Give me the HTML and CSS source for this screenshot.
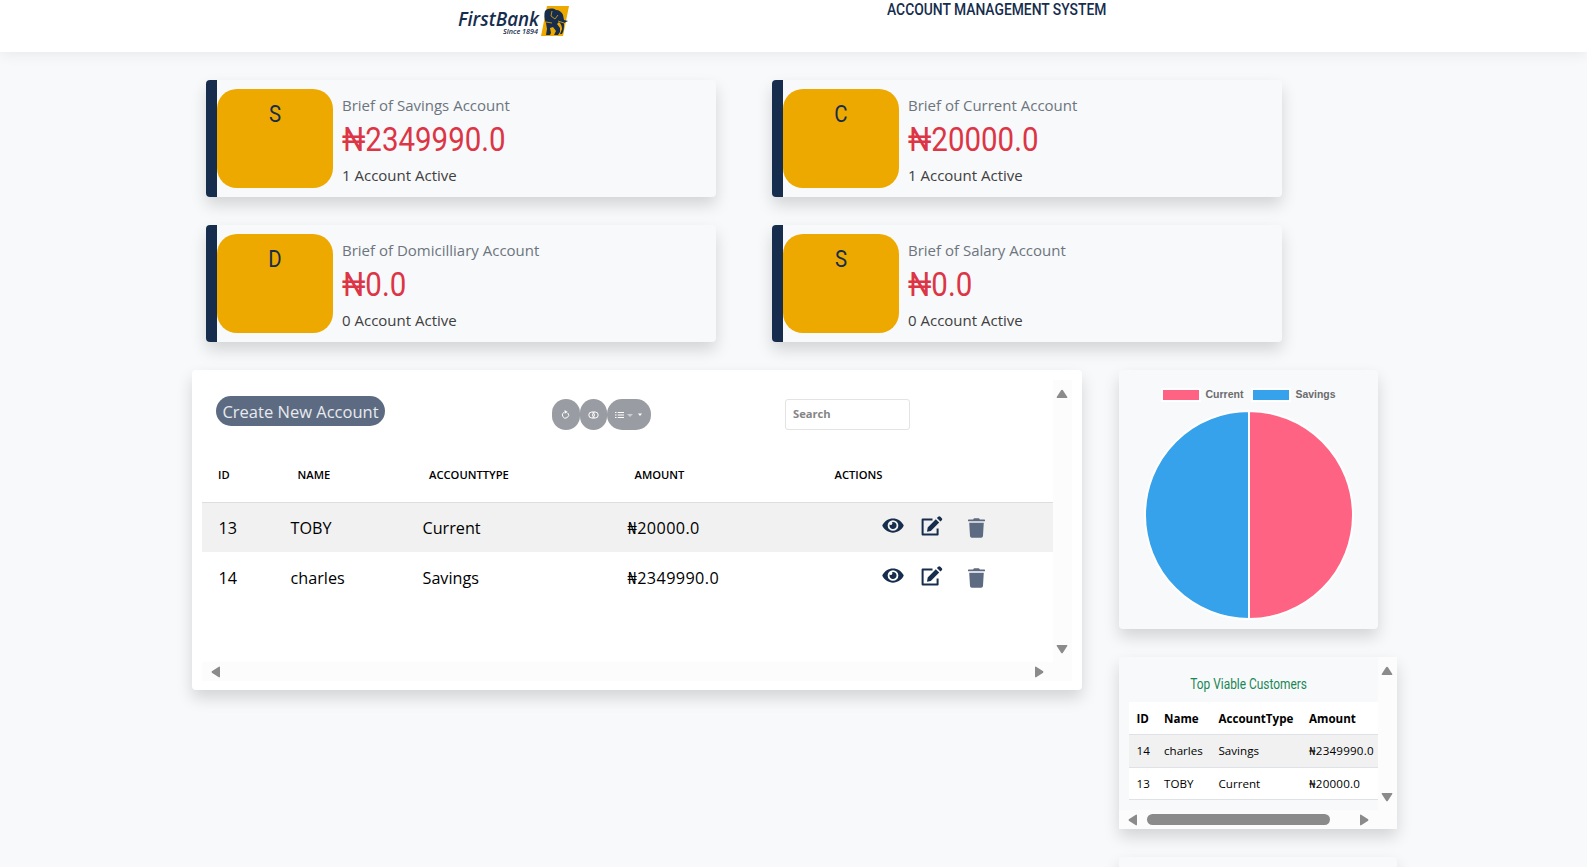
FILE: index.html
```html
<!DOCTYPE html>
<html lang="en">
<head>
<meta charset="utf-8">
<title>Account Management System</title>
<link rel="stylesheet" href="styles.css">
</head>
<body>
<svg class="defs" width="0" height="0" aria-hidden="true">
  <symbol id="eye" viewBox="0 0 576 512"><path d="M572.5 241.400C518.300 135.600 410.900 64 288 64S57.700 135.600 3.500 241.400a32.400 32.400 0 0 0 0 29.200C57.700 376.400 165.100 448 288 448s230.300-71.600 284.500-177.400a32.400 32.400 0 0 0 0-29.200zM288 400a144 144 0 1 1 144-144 144 144 0 0 1-144 144zm0-240a95.300 95.300 0 0 0-25.300 3.800 47.900 47.900 0 0 1-66.900 66.900A95.800 95.800 0 1 0 288 160z"/></symbol>
  <symbol id="edit" viewBox="0 0 22 20"><path fill="none" stroke="#162d4d" stroke-width="2" stroke-linejoin="round" d="M11.500 3.500H1.600V18.600H16.600V12.500"/><path d="M14.800 3.200l3.400 3.400-8.400 8.300-3.800.8.700-4.100zM15.900 2.100l1.300-1.300c.7-.7 1.500-.7 2.200 0l1.400 1.400c.6.700.6 1.400 0 2.100l-1.400 1.300z"/></symbol>
  <symbol id="trash" viewBox="0 0 448 512"><path d="M432 32H312l-9.400-18.700A24 24 0 0 0 281.100 0H166.800a23.700 23.700 0 0 0-21.400 13.300L136 32H16A16 16 0 0 0 0 48v16a16 16 0 0 0 16 16h416a16 16 0 0 0 16-16V48a16 16 0 0 0-16-16zM32 116l21.200 351a48 48 0 0 0 47.900 45h245.800a48 48 0 0 0 47.900-45L416 116z"/></symbol>
  <symbol id="arrow" viewBox="0 0 12 10"><path d="M5.100 1.200a1 1 0 0 1 1.800 0l4.400 6.700a.8.8 0 0 1-.7 1.100H1.400a.8.800 0 0 1-.7-1.100z"/></symbol>
</svg>

<header class="topbar">
  <svg class="logo" width="112" height="34" viewBox="0 0 112 34">
    <text class="logo-name" x="0" y="20.500" textLength="81" lengthAdjust="spacingAndGlyphs">FirstBank</text>
    <text class="logo-since" x="45" y="28.500" textLength="35" lengthAdjust="spacingAndGlyphs">Since 1894</text>
    <path fill="#eda900" d="M89 1h22l-6 30H83z"/>
    <path fill="#162d4d" d="M87 6c3-3 8-3 11-1 3 0 6 2 7 5l1 5 4 1-4 2c0 4 0 8-2 11h-2l2-5c0-3-1-5-3-7l-2 2 3 4v4l-2 3h-4l2-4-3-4-3 1 1 5-1 2h-4l1-6-1-6c-2-4-2-9-1-12z"/>
    <path fill="none" stroke="#eda900" stroke-width=".8" d="M94 6l-1 5 4 3 3-4m0 6l6 2M88 17l6 1"/>
  </svg>
  <h1 class="title"><span>ACCOUNT MANAGEMENT SYSTEM</span></h1>
</header>

<main>
  <section class="briefs">
    <article class="brief"><div class="badge"><span>S</span></div><div class="info"><p class="label">Brief of Savings Account</p><p class="sum"><span>₦2349990.0</span></p><p class="count">1 Account Active</p></div></article>
    <article class="brief"><div class="badge"><span>C</span></div><div class="info"><p class="label">Brief of Current Account</p><p class="sum"><span>₦20000.0</span></p><p class="count">1 Account Active</p></div></article>
    <article class="brief"><div class="badge"><span>D</span></div><div class="info"><p class="label">Brief of Domicilliary Account</p><p class="sum"><span>₦0.0</span></p><p class="count">0 Account Active</p></div></article>
    <article class="brief"><div class="badge"><span>S</span></div><div class="info"><p class="label">Brief of Salary Account</p><p class="sum"><span>₦0.0</span></p><p class="count">0 Account Active</p></div></article>
  </section>

  <div class="panels">
    <section class="accounts">
      <div class="content">
        <div class="toolbar">
          <button class="create">Create New Account</button>
          <div class="tools">
            <button class="tool"><svg width="9" height="10" viewBox="0 0 9 10"><path class="line" d="M3.200 2.200A3.100 3.100 0 1 0 6.800 3"/><path fill="#fff" d="M3.600 0L6.800 1.900 3.600 3.800z"/></svg></button>
            <button class="tool"><svg width="11" height="8" viewBox="0 0 11 8"><rect class="line" x=".8" y="1" width="9.400" height="6" rx="3"/><path class="line" d="M4.500 1.200a3 3 0 0 1 0 5.600M6.500 1.200a3 3 0 0 0 0 5.600"/></svg></button>
            <button class="tool wide"><svg width="28" height="8" viewBox="0 0 28 8"><path class="line" d="M0 1.500h1.500M0 4h1.500M0 6.500h1.500M2.700 1.500H9M2.700 4H9M2.700 6.500H9"/><path fill="#fff" opacity=".5" d="M12 3h6l-3 3z"/><path fill="#fff" d="M23 2.500h4l-2 2.500z"/></svg></button>
          </div>
          <input class="search" type="text" placeholder="Search">
        </div>
        <table class="grid">
          <thead><tr><th class="id">ID</th><th class="name">NAME</th><th class="type">ACCOUNTTYPE</th><th class="amount">AMOUNT</th><th>ACTIONS</th></tr></thead>
          <tbody>
            <tr><td>13</td><td>TOBY</td><td>Current</td><td class="money">₦20000.0</td><td><div class="actions"><svg class="eye"><use href="#eye"/></svg><svg class="edit"><use href="#edit"/></svg><svg class="trash"><use href="#trash"/></svg></div></td></tr>
            <tr><td>14</td><td>charles</td><td>Savings</td><td class="money">₦2349990.0</td><td><div class="actions"><svg class="eye"><use href="#eye"/></svg><svg class="edit"><use href="#edit"/></svg><svg class="trash"><use href="#trash"/></svg></div></td></tr>
          </tbody>
        </table>
      </div>
      <div class="vbar"><svg class="arrow"><use href="#arrow"/></svg><svg class="arrow down"><use href="#arrow"/></svg></div>
      <div class="hbar"><svg class="arrow left"><use href="#arrow"/></svg><svg class="arrow right"><use href="#arrow"/></svg></div>
      <div class="corner"></div>
    </section>

    <aside class="side">
      <section class="chart">
        <svg width="259" height="259" viewBox="0 0 259 259">
          <g stroke="#fff" stroke-width="2">
            <rect x="43" y="19" width="38" height="12" fill="#ff6384"/>
            <rect x="133" y="19" width="38" height="12" fill="#36a2eb"/>
            <path fill="#ff6384" d="M130 41a104 104 0 0 1 0 208z"/>
            <path fill="#36a2eb" d="M130 41a104 104 0 0 0 0 208z"/>
          </g>
          <text class="legend" x="86.500" y="28" textLength="38" lengthAdjust="spacingAndGlyphs">Current</text>
          <text class="legend" x="176.500" y="28" textLength="40" lengthAdjust="spacingAndGlyphs">Savings</text>
        </svg>
      </section>

      <section class="customers">
        <div class="content">
          <h2 class="heading"><span>Top Viable Customers</span></h2>
          <table class="top">
            <thead><tr><th class="id">ID</th><th class="name">Name</th><th class="type">AccountType</th><th>Amount</th></tr></thead>
            <tbody>
              <tr><td>14</td><td>charles</td><td>Savings</td><td class="money">₦2349990.0</td></tr>
              <tr><td>13</td><td>TOBY</td><td>Current</td><td class="money">₦20000.0</td></tr>
            </tbody>
          </table>
        </div>
        <div class="vbar"><svg class="arrow"><use href="#arrow"/></svg><svg class="arrow down"><use href="#arrow"/></svg></div>
        <div class="hbar"><svg class="arrow left"><use href="#arrow"/></svg><div class="thumb"></div><svg class="arrow right"><use href="#arrow"/></svg></div>
        <div class="corner"></div>
      </section>

      <section class="next"></section>
    </aside>
  </div>
</main>
</body>
</html>
```
FILE: styles.css
```css
* { box-sizing: border-box; }
html, body { height: 100%; overflow: hidden; }
body {
  margin: 0;
  background: #f8f9fb;
  color: #000;
  font-family: "Open Sans", "Noto Sans", sans-serif;
  display: flex;
  flex-direction: column;
}
h1, h2, p { margin: 0; font-weight: 400; }
button { border: 0; padding: 0; font-family: inherit; }
svg { display: block; flex: none; }
.defs { position: absolute; }

.topbar {
  flex: none;
  height: 52px;
  display: flex;
  align-items: flex-start;
  padding: 5px 0 0 458px;
  background: #fff;
  box-shadow: 0 2px 14px rgba(0, 0, 0, .07);
}
.logo-name { font: italic 600 19px "Open Sans", sans-serif; fill: #162d4d; }
.logo-since { font: italic 600 7px "Open Sans", sans-serif; fill: #162d4d; }
.title {
  margin: -6px 0 0 317px;
  font: 500 17px/20px Roboto, sans-serif;
  color: #162d4d;
  white-space: nowrap;
}
.title span, .heading span, .sum span, .badge span { display: inline-block; transform: scaleX(.85); transform-origin: left; }
.title span { transform: scaleX(.815); }

main { flex: 1; min-height: 0; overflow: hidden; padding: 28px 0 0; margin-top: 0; }
.briefs {
  display: grid;
  grid-template-columns: 510px 510px;
  gap: 28px 56px;
  padding-left: 206px;
}
.brief, .accounts, .chart, .customers, .next {
  border-radius: 4px;
  box-shadow: 0 8px 16px rgba(0, 0, 0, .15);
}
.brief {
  height: 117px;
  display: flex;
  align-items: center;
  border-left: 11px solid #162d4d;
}
.badge {
  width: 116px;
  height: 99px;
  padding-top: 11px;
  border-radius: 20px;
  background: #eda900;
  color: #162d4d;
  text-align: center;
  font: 400 24px/29px Roboto, sans-serif;
}
.badge span { transform-origin: center; }
.info { padding: 6px 0 0 9px; white-space: nowrap; }
.label { color: #6c757d; font-size: 15px; line-height: 23px; }
.sum { color: #dc3545; font: 400 34px/45px Roboto, sans-serif; }
.sum span { transform: scaleX(.867); }
.count { color: #404040; font-size: 15px; line-height: 27px; }

.panels { display: flex; align-items: flex-start; gap: 37px; padding: 28px 0 0 192px; }
.accounts {
  width: 890px;
  height: 320px;
  padding: 10px 10px 9px;
  background: #fff;
  display: grid;
  grid-template: 282px 19px / 851px 19px;
}
.toolbar { display: flex; align-items: flex-start; padding: 16px 0 0 14px; height: 72px; }
.create {
  width: 169px;
  height: 30px;
  padding-top: 1px;
  border-radius: 15px;
  background: #5c6b82;
  color: #e8eaed;
  font-size: 16.500px;
  line-height: 30px;
  white-space: nowrap;
}
.tools { display: flex; margin: 3px 0 0 167px; }
.tool {
  width: 27.500px;
  height: 31px;
  border-radius: 14px;
  background: #999da3;
  display: flex;
  align-items: center;
  justify-content: center;
}
.tool.wide { width: 44px; border-radius: 15px; }
.line { fill: none; stroke: #fff; stroke-width: 1; }
.search {
  width: 125px;
  height: 31px;
  margin: 3px 0 0 134px;
  padding: 0 7px 2px;
  border: 1px solid #e3e3e3;
  border-radius: 3px;
  background: #fff;
  font: 700 11.200px "Open Sans", sans-serif;
}
.search::placeholder { color: #858585; }

table { border-collapse: collapse; table-layout: fixed; }
th, td { text-align: left; white-space: nowrap; }
.grid { width: 851px; }
.grid th {
  height: 50px;
  padding: 0 0 4px 23.500px;
  border-bottom: 1px solid #dcdee0;
  font-size: 11.200px;
  font-weight: 600;
}
.grid th.id { width: 72px; padding-left: 16px; }
.grid .name { width: 132px; }
.grid .type { width: 205px; padding-left: 23px; }
.grid .amount { width: 200px; }
.grid td { height: 50px; padding: 1px 0 0 16.500px; font-size: 16.200px; }
.grid .money { letter-spacing: .4px; }
tbody tr:nth-child(odd) { background: #f1f1f1; }
.actions { display: flex; align-items: flex-start; height: 24px; padding-left: 54.500px; }
.actions svg { fill: #162d4d; }
.eye { width: 22px; height: 19px; }
.edit { width: 22px; height: 20px; margin-left: 17px; }
.actions .trash { width: 17px; height: 20px; margin: 2px 0 0 25px; fill: #5c6b82; }

.vbar, .hbar, .corner { background: #fcfcfc; }
.vbar { display: flex; flex-direction: column; justify-content: space-between; align-items: center; padding: 9px 1px 8px 0; }
.hbar { display: flex; align-items: center; justify-content: space-between; padding: 0 8px; }
.arrow { width: 12px; height: 10px; fill: #8b8b8b; }
.down { transform: rotate(180deg); }
.left { transform: rotate(-90deg); }
.right { transform: rotate(90deg); }

.side { display: grid; gap: 28px; }
.chart { width: 259px; height: 259px; }
.legend { font: 700 11px "Liberation Sans", sans-serif; fill: #6b6b6b; }
.customers {
  width: 278px;
  height: 172px;
  display: grid;
  grid-template: 153px 19px / 259px 19px;
}
.customers .content { padding-left: 10px; overflow: hidden; }
.heading { height: 45px; padding: 17px 10px 0 0; text-align: center; color: #198754; font: 400 14px/20px Roboto, sans-serif; }
.heading span { transform-origin: center; }
.top { width: 249px; background: #fff; font-size: 11.600px; }
.top th, .top td { height: 32.500px; padding: 0 0 0 7.500px; border-bottom: 1px solid #dee2e6; }
.top th { font-weight: 700; }
.top .money { letter-spacing: .2px; }
.top .id { width: 27.500px; }
.top .name { width: 54.500px; }
.top .type { width: 90.500px; }
.thumb { width: 183px; height: 11px; border-radius: 6px; background: #8b8b8b; margin-right: 20px; }
.next { width: 278px; height: 172px; }
```
